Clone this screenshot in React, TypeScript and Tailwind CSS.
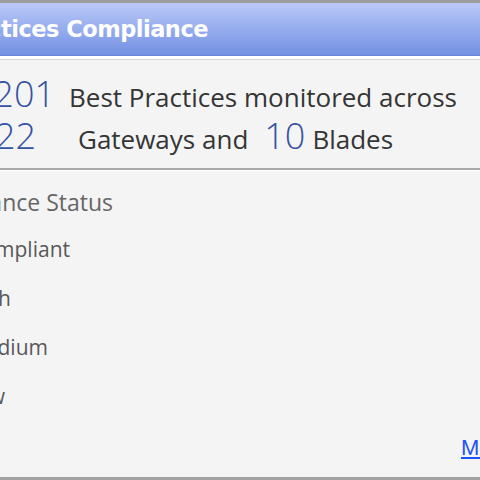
// right-aligned cell: text that is wider than the cell spills out to the left and gets clipped
function RightEdge({ w, className, children }: { w: string; className?: string; children: React.ReactNode }) {
  return (
    <div className={`${w} shrink-0 flex justify-end`}>
      <span className={`shrink-0 whitespace-nowrap ${className ?? ''}`}>{children}</span>
    </div>
  );
}

export default function App() {
  const rows = [
    { label: 'Non-Compliant', w: 'w-[70px]' },
    { label: 'High', w: 'w-[11px]' },
    { label: 'Medium', w: 'w-[48px]' },
    { label: 'Low', w: 'w-[5px]' },
  ];

  return (
    <div className="w-[480px] h-[480px] overflow-hidden bg-[#f4f4f4] flex flex-col font-['Open_Sans',sans-serif]">
      <div className="h-[3px] bg-[#9c9c9c] shrink-0" />
      <div className="h-[53px] shrink-0 bg-gradient-to-b from-[#bac9f8] to-[#7390e2] border-b border-[#6b87da] flex items-center">
        <RightEdge w="w-[208px]" className="text-white font-bold text-[22.5px] tracking-[-0.5px] leading-[22px] font-['DejaVu_Sans',sans-serif]">
          Best Practices Compliance
        </RightEdge>
      </div>
      <div className="h-[3px] bg-white shrink-0" />
      <div className="h-[1px] bg-[#d6d6d6] shrink-0" />

      <div className="pt-[13px] flex flex-col">
        <div className="flex items-baseline h-[42px]">
          <RightEdge w="w-[55px]" className="text-[#3452a4] text-[36px] leading-[42px] font-light">201</RightEdge>
          <span className="ml-[14px] whitespace-nowrap text-[#353535] text-[26px] leading-[42px]">Best Practices monitored across</span>
        </div>
        <div className="flex items-baseline h-[42px]">
          <RightEdge w="w-[36px]" className="text-[#3452a4] text-[36px] leading-[42px] font-light">22</RightEdge>
          <span className="ml-[42px] whitespace-nowrap text-[#353535] text-[26px] leading-[42px]">Gateways and</span>
          <span className="ml-[16px] text-[#3452a4] text-[36px] leading-[42px] font-light">10</span>
          <span className="ml-[7px] text-[#353535] text-[26px] leading-[42px]">Blades</span>
        </div>
      </div>

      <div className="mt-[11px] h-[2px] bg-[#a9a9a9] shrink-0" />
      <div className="h-[1px] bg-white shrink-0" />

      <div className="flex-1 flex flex-col">
        <div className="mt-[16px] flex">
          <RightEdge w="w-[113px]" className="text-[#666] text-[23px] leading-[30px]">Compliance Status</RightEdge>
        </div>
        <div className="mt-[17px] flex flex-col gap-[19px]">
          {rows.map((r) => (
            <div key={r.label} className="flex">
              <RightEdge w={r.w} className="text-[#585858] text-[21px] leading-[30px]">{r.label}</RightEdge>
            </div>
          ))}
        </div>
        <div className="mt-auto mb-[13px] pl-[461px] whitespace-nowrap leading-[30px]">
          <a href="#" className="text-[#1f52f5] underline text-[22px] font-['Liberation_Sans',sans-serif]">More...</a>
        </div>
      </div>

      <div className="h-[3px] bg-[#a2a2a2] shrink-0" />
    </div>
  );
}
